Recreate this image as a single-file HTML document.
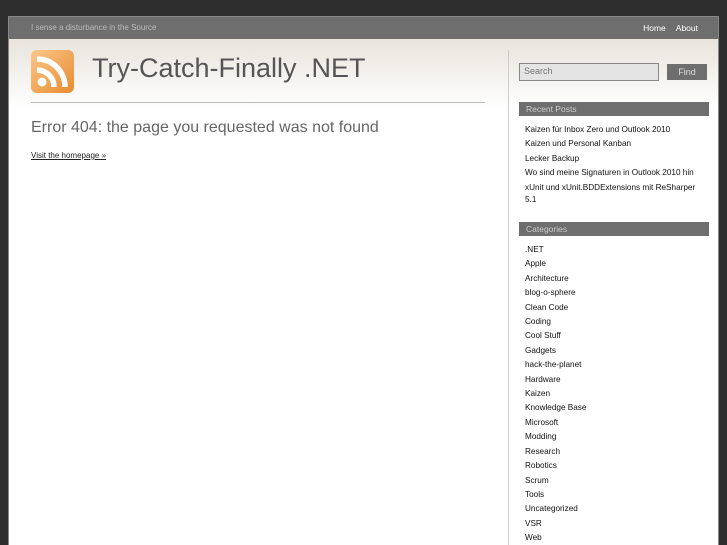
<!DOCTYPE html>
<html><head><style>
html,body{margin:0;width:727px;height:545px;overflow:hidden;background:#2e2e2e;font-family:"Liberation Sans",sans-serif;}
#page{position:absolute;left:8px;top:16px;width:711px;height:529px;background:#fff;border:1px solid #888;border-bottom:0;box-sizing:border-box;overflow:hidden}
#bar{height:22px;background:#6e6e6e;color:#bbb;font-size:8px;line-height:22px;position:relative}
#bar .t{position:absolute;left:22px}
#bar .n{position:absolute;right:20px;color:#fff;font-size:8.5px}
#bar .n span{margin-left:10px}
#head{position:absolute;top:22px;left:0;right:0;height:70px;background:linear-gradient(#e8e4dc,#fff)}
.rss{position:absolute;left:22px;top:33px;width:43px;height:43px;border-radius:6px;background:linear-gradient(135deg,#fbc78a,#e88b2e);}
h1{position:absolute;left:83px;top:36px;margin:0;font-weight:normal;font-size:27px;color:#555}
.hr{position:absolute;left:22px;top:85px;width:454px;border-top:1px solid #bbb}
h2{position:absolute;left:22px;top:102px;margin:0;font-weight:normal;font-size:16px;color:#666}
.visit{position:absolute;left:22px;top:134px;font-size:8px;color:#222;text-decoration:underline}
.div{position:absolute;left:499px;top:33px;bottom:0;border-left:1px solid #ccc}
.search{position:absolute;left:510px;top:46px;width:140px;height:18px;border:1px solid #888;background:#e4e4e4;box-sizing:border-box;font-size:9px;color:#777;padding:2px 4px}
.find{position:absolute;left:658px;top:47px;width:40px;height:16px;background:#6e6e6e;color:#ddd;font-size:9px;text-align:center;line-height:16px}
.hd{position:absolute;left:510px;width:190px;height:14px;background:#6e6e6e;color:#ccc;font-size:8.5px;line-height:14px;text-indent:7px}
.l{position:absolute;left:516px;font-size:8.2px;color:#111;line-height:14.4px;width:178px}
</style></head><body>
<div id="page">
<div id="bar"><span class="t">I sense a disturbance in the Source</span><span class="n"><span>Home</span><span>About</span></span></div>
<div id="head"></div>
<div class="rss"><svg width="43" height="43" viewBox="0 0 43 43"><circle cx="11" cy="32" r="4.5" fill="#fff"/><path d="M6 20a17 17 0 0 1 17 17" stroke="#fff" stroke-width="5.5" fill="none"/><path d="M6 9a28 28 0 0 1 28 28" stroke="#fff" stroke-width="5.5" fill="none"/></svg></div>
<h1>Try-Catch-Finally .NET</h1>
<div class="hr"></div>
<h2>Error 404: the page you requested was not found</h2>
<div class="visit">Visit the homepage »</div>
<div class="div"></div>
<div class="search">Search</div><div class="find">Find</div>
<div class="hd" style="top:85px">Recent Posts</div>
<div class="l" style="top:106px">Kaizen für Inbox Zero und Outlook 2010<br>Kaizen und Personal Kanban<br>Lecker Backup<br>Wo sind meine Signaturen in Outlook 2010 hin<br><span style="line-height:12px;display:block;padding-top:1px">xUnit und xUnit.BDDExtensions mit ReSharper<br>5.1</span></div>
<div class="hd" style="top:205px">Categories</div>
<div class="l" style="top:226px">.NET<br>Apple<br>Architecture<br>blog-o-sphere<br>Clean Code<br>Coding<br>Cool Stuff<br>Gadgets<br>hack-the-planet<br>Hardware<br>Kaizen<br>Knowledge Base<br>Microsoft<br>Modding<br>Research<br>Robotics<br>Scrum<br>Tools<br>Uncategorized<br>VSR<br>Web</div>
</div>
</body></html>
